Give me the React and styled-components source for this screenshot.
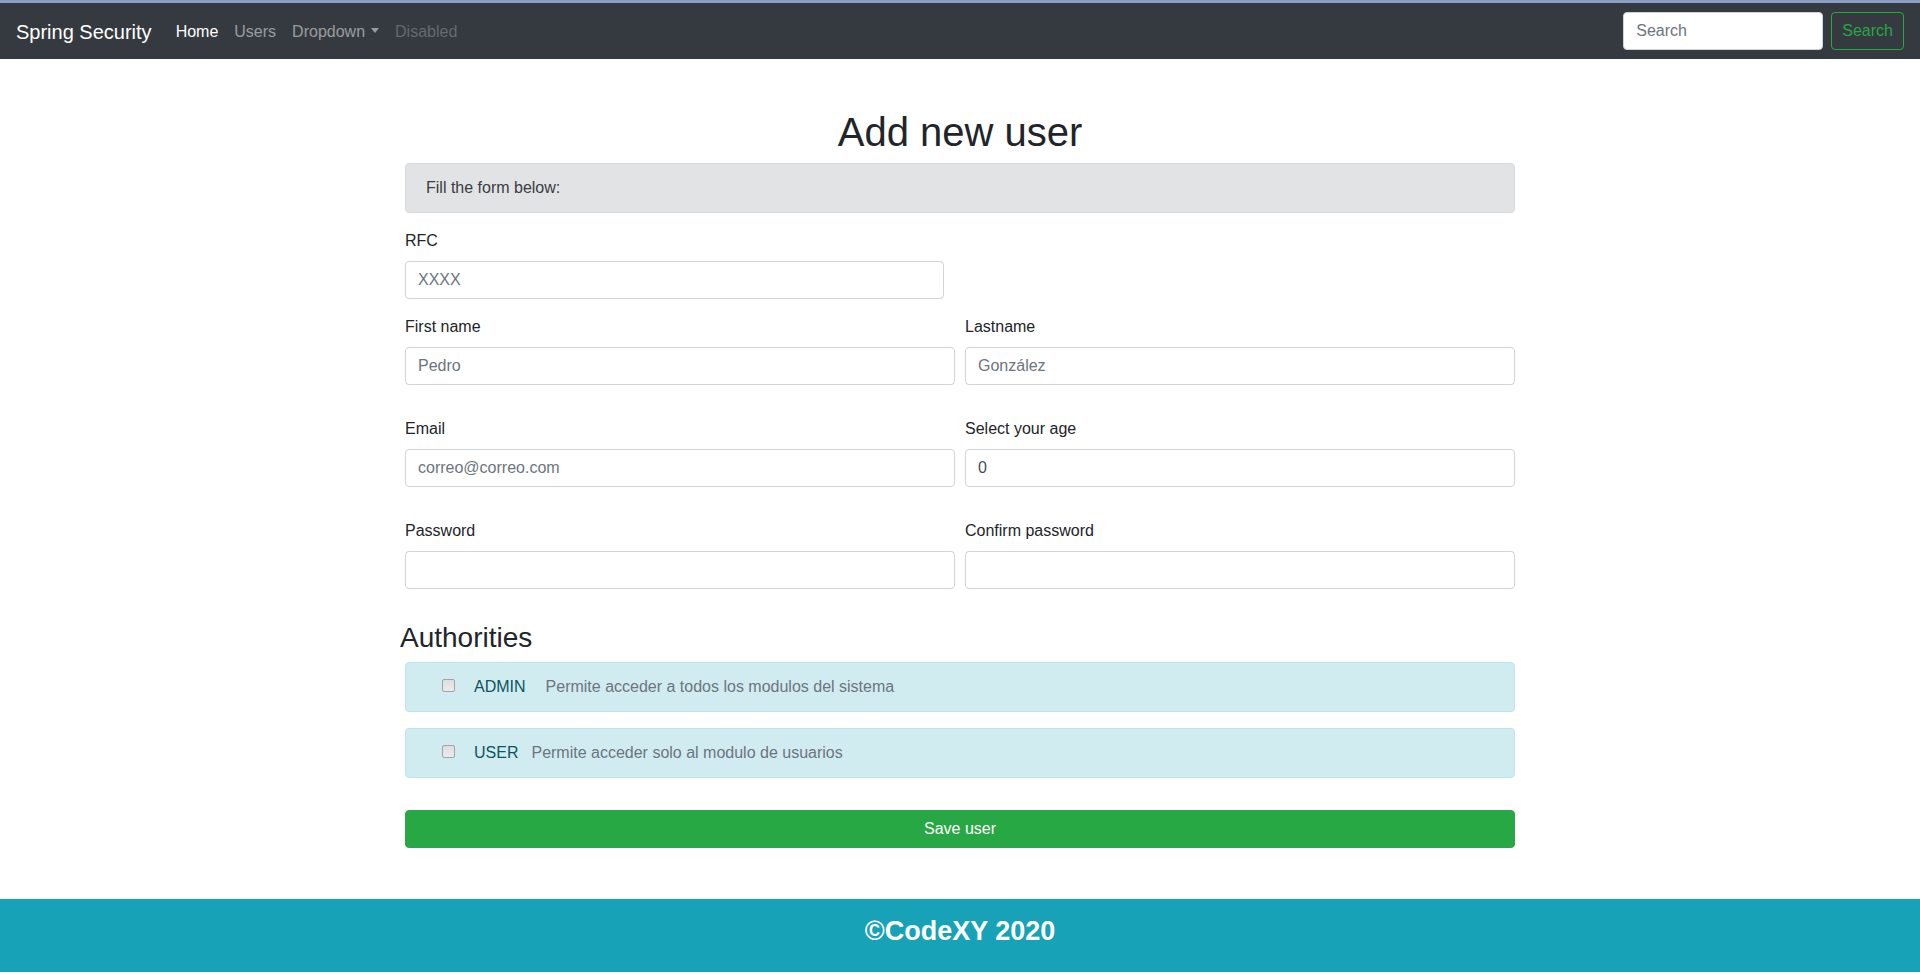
import styled, { createGlobalStyle } from 'styled-components';

const GlobalStyle = createGlobalStyle`
  body {
    margin: 0;
    font-family: "Segoe UI", "Liberation Sans", Arial, sans-serif;
    font-size: 16px;
    line-height: 1.5;
    color: #212529;
    background: #fff;
  }
  * { box-sizing: border-box; }
`;

const NavBar = styled.nav`
  display: flex;
  align-items: center;
  justify-content: space-between;
  padding: 9px 16px 7px;
  background-color: #343a40;
  border-top: 3px solid #8d9ec6;
`;

const NavLeft = styled.div`
  display: flex;
  align-items: center;
`;

const Brand = styled.a`
  padding: 5px 0;
  margin-right: 16px;
  font-size: 20px;
  line-height: 30px;
  color: #fff;
  text-decoration: none;
`;

const NavList = styled.ul`
  display: flex;
  margin: 0;
  padding: 0;
  list-style: none;
`;

const NavLink = styled.a`
  display: block;
  padding: 8px;
  color: ${({ $tone }) =>
    $tone === 'active' ? '#fff' : $tone === 'disabled' ? 'rgba(255,255,255,.25)' : 'rgba(255,255,255,.5)'};
  text-decoration: none;

  ${({ $caret }) =>
    $caret &&
    `
    &::after {
      content: '';
      display: inline-block;
      margin-left: 6px;
      vertical-align: 4px;
      border-top: 5px solid;
      border-right: 4.5px solid transparent;
      border-left: 4.5px solid transparent;
    }
  `}
`;

const SearchForm = styled.form`
  display: flex;
  align-items: center;
  margin: -2px 0 0;
`;

const Input = styled.input`
  display: block;
  width: ${({ $width }) => $width || '100%'};
  height: 38px;
  padding: 6px 12px;
  font-family: inherit;
  font-size: 16px;
  line-height: 24px;
  color: #495057;
  background: #fff;
  border: 1px solid #ced4da;
  border-radius: 4px;
  outline: none;

  &::placeholder {
    color: #6c757d;
    opacity: 1;
  }
`;

const SearchInput = styled(Input)`
  margin-right: 8px;
`;

const OutlineButton = styled.button`
  height: 38px;
  padding: 6px 10px;
  font-family: inherit;
  font-size: 16px;
  line-height: 24px;
  color: #28a745;
  background: transparent;
  border: 1px solid #28a745;
  border-radius: 4px;
`;

const Container = styled.main`
  width: 1110px;
  margin: 0 auto;
  padding: 49px 0 51px;
`;

const Title = styled.h1`
  margin: 0 0 7px;
  font-size: 40px;
  font-weight: 500;
  line-height: 1.2;
  text-align: center;
`;

const Alert = styled.div`
  height: 50px;
  margin-bottom: 16px;
  padding: 12px 20px;
  border: 1px solid ${({ $variant }) => ($variant === 'info' ? '#bee5eb' : '#d6d8db')};
  border-radius: 4px;
  background-color: ${({ $variant }) => ($variant === 'info' ? '#d1ecf1' : '#e2e3e5')};
  color: ${({ $variant }) => ($variant === 'info' ? '#0c5460' : '#383d41')};
`;

const FormGroup = styled.div`
  width: ${({ $width }) => $width || 'auto'};
  margin-bottom: ${({ $space }) => $space ?? 16}px;
`;

const Label = styled.label`
  display: block;
  margin-bottom: 8px;
`;

const FormRow = styled.div`
  display: grid;
  grid-template-columns: 1fr 1fr;
  column-gap: 10px;
  margin-bottom: ${({ $space }) => $space}px;
`;

const SectionTitle = styled.h3`
  margin: 0 0 7px -5px;
  font-size: 28px;
  font-weight: 500;
  line-height: 1.2;
`;

const AuthorityAlert = styled(Alert)`
  display: flex;
  align-items: center;
  padding-left: 36px;
`;

const Checkbox = styled.input`
  appearance: none;
  width: 13px;
  height: 13px;
  margin: -2px 19px 0 0;
  border: 1px solid #a3a3a3;
  border-radius: 2px;
  background: linear-gradient(#dedede, #ececec);
`;

const RoleName = styled.span`
  margin-right: ${({ $gap }) => $gap}px;
  color: #0c5460;
`;

const RoleDesc = styled.span`
  color: #6c757d;
`;

const SaveButton = styled.button`
  display: block;
  width: 100%;
  height: 38px;
  margin-top: 32px;
  padding: 6px 12px;
  font-family: inherit;
  font-size: 16px;
  line-height: 24px;
  color: #fff;
  background-color: #28a745;
  border: 1px solid #28a745;
  border-radius: 4px;
`;

const Footer = styled.footer`
  padding: 16px;
  background-color: #17a2b8;
  color: #fff;
  text-align: center;
`;

const FooterTitle = styled.h3`
  margin: 0 0 8px;
  font-size: 27px;
  font-weight: 700;
  line-height: 1.25;
`;

const rows = [
  [
    { label: 'First name', placeholder: 'Pedro' },
    { label: 'Lastname', placeholder: 'González' },
  ],
  [
    { label: 'Email', placeholder: 'correo@correo.com' },
    { label: 'Select your age', value: '0' },
  ],
  [
    { label: 'Password', type: 'password' },
    { label: 'Confirm password', type: 'password' },
  ],
];

const authorities = [
  { name: 'ADMIN', desc: 'Permite acceder a todos los modulos del sistema', gap: 20 },
  { name: 'USER', desc: 'Permite acceder solo al modulo de usuarios', gap: 13 },
];

const App = () => (
  <>
    <GlobalStyle />
    <NavBar>
      <NavLeft>
        <Brand href='#'>Spring Security</Brand>
        <NavList>
          <li><NavLink $tone='active' href='#'>Home</NavLink></li>
          <li><NavLink href='#'>Users</NavLink></li>
          <li><NavLink $caret href='#'>Dropdown</NavLink></li>
          <li><NavLink $tone='disabled' href='#'>Disabled</NavLink></li>
        </NavList>
      </NavLeft>
      <SearchForm onSubmit={(e) => e.preventDefault()}>
        <SearchInput $width='200px' type='search' placeholder='Search' aria-label='Search' />
        <OutlineButton type='submit'>Search</OutlineButton>
      </SearchForm>
    </NavBar>

    <Container>
      <Title>Add new user</Title>
      <Alert>Fill the form below:</Alert>

      <FormGroup $width='539px'>
        <Label>RFC</Label>
        <Input placeholder='XXXX' />
      </FormGroup>

      {rows.map((row, i) => (
        <FormRow key={i} $space={32}>
          {row.map((field) => (
            <FormGroup key={field.label} $space={0}>
              <Label>{field.label}</Label>
              <Input
                type={field.type || 'text'}
                placeholder={field.placeholder}
                defaultValue={field.value}
              />
            </FormGroup>
          ))}
        </FormRow>
      ))}

      <SectionTitle>Authorities</SectionTitle>
      {authorities.map((a) => (
        <AuthorityAlert key={a.name} $variant='info'>
          <Checkbox type='checkbox' />
          <RoleName $gap={a.gap}>{a.name}</RoleName>
          <RoleDesc>{a.desc}</RoleDesc>
        </AuthorityAlert>
      ))}

      <SaveButton type='button'>Save user</SaveButton>
    </Container>

    <Footer>
      <FooterTitle>©CodeXY 2020</FooterTitle>
    </Footer>
  </>
);

export default App;
